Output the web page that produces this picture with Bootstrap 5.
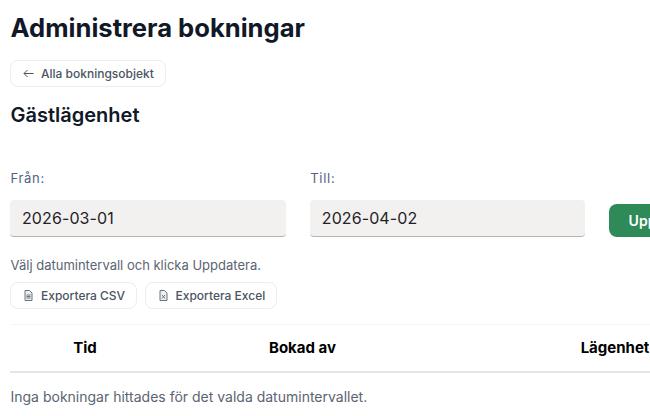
<!doctype html>
<html lang="sv">
<head>
<meta charset="utf-8">
<title>Administrera bokningar</title>
<link href="https://cdn.jsdelivr.net/npm/bootstrap@5.3.0/dist/css/bootstrap.min.css" rel="stylesheet">
<style>
html, body { overflow: hidden; height: 416px; }
body { font-family: "Inter", sans-serif; color: #111827; background: #fff; }
.page-wrap { width: 1000px; padding: 0 10px; }
.title-main { font-size: 25.6px; font-weight: 700; line-height: 32px; margin: 12px 0 16px; padding-left: .5px; color: #111827; }
.title-sub { font-size: 20px; font-weight: 600; line-height: 26px; margin: 15px 0 0; padding-left: .5px; color: #111827; }
.ghost-btn { display: inline-flex; align-items: center; height: 27px; padding: 0 11px 0 12px; gap: 7px; border: 1px solid #ecedef; border-radius: 8px; background: #fff; font-size: 12px; font-weight: 500; color: #4b5563; text-decoration: none; }
.ghost-btn svg { flex: none; }
.date-row { margin-top: 42px; gap: 24.2px; }
.date-col { width: 275.6px; }
.date-label { font-size: 13px; line-height: 16px; color: #4f6485; letter-spacing: .7px; margin-bottom: 14px; padding-left: .5px; display: block; }
.date-input { width: 100%; height: 37px; border: 0; border-bottom: 1px solid #b5b5b5; border-radius: 4px; background: #f2f1f0; font-family: inherit; font-size: 16px; letter-spacing: .1px; color: #1f2328; padding: 0 12px; }
.go-btn { height: 33px; width: 110px; margin-left: -.4px; border: 0; border-radius: 8px; background: #2e8b57; color: #fff; font-size: 14px; font-weight: 600; }
.hint { font-size: 13px; line-height: 16px; color: #5b6472; margin: 20px 0 9px; padding-left: .5px; }
.export-row { gap: 7.4px; }
.icon-slot { width: 10px; margin-left: 1px; display: inline-flex; }
.result-table { table-layout: fixed; width: 775px; margin: 15px 0 0; border-top: 1px solid #f5f5f6; border-bottom: 2px solid #e5e5e5; }
.result-table th { height: 47px; padding: 0; vertical-align: middle; text-align: center; font-size: 15px; font-weight: 700; color: #000; border: 0; }
.empty-note { font-size: 14px; line-height: 18px; color: #5b6472; margin: 15px 0 0; padding-left: .5px; }
</style>
</head>
<body>
<div class="page-wrap">
  <h1 class="title-main">Administrera bokningar</h1>
  <a class="ghost-btn" href="#">
    <svg width="11" height="9" viewBox="0 0 11 9" fill="none" stroke="#4b5563" stroke-width="1"><path d="M10.5 4.5H1M4.5 1 1 4.5 4.5 8"/></svg>
    Alla bokningsobjekt
  </a>
  <h2 class="title-sub">Gästlägenhet</h2>
  <div class="d-flex align-items-end date-row">
    <div class="date-col">
      <label class="date-label" for="from">Från:</label>
      <input class="date-input" id="from" type="text" value="2026-03-01">
    </div>
    <div class="date-col">
      <label class="date-label" for="to">Till:</label>
      <input class="date-input" id="to" type="text" value="2026-04-02">
    </div>
    <button class="go-btn" type="button">Uppdatera</button>
  </div>
  <p class="hint">Välj datumintervall och klicka Uppdatera.</p>
  <div class="d-flex export-row">
    <a class="ghost-btn" href="#">
      <span class="icon-slot"><svg width="9" height="11" viewBox="0 0 9 11" fill="#eceef1" stroke="#6b7280" stroke-width="1"><path d="M1 .5h4.5L8 3v7.5H1zM2.5 5h4M2.5 6.5h4M2.5 8h4"/></svg></span>
      Exportera CSV
    </a>
    <a class="ghost-btn" href="#">
      <span class="icon-slot"><svg width="9" height="11" viewBox="0 0 9 11" fill="#eceef1" stroke="#6b7280" stroke-width="1"><path d="M1 .5h4.5L8 3v7.5H1zM3 5l3 3.5M6 5 3 8.5"/></svg></span>
      Exportera Excel
    </a>
  </div>
  <table class="table result-table">
    <colgroup><col style="width:150px"><col style="width:285px"><col style="width:340px"></colgroup>
    <thead><tr><th>Tid</th><th>Bokad av</th><th>Lägenhet</th></tr></thead>
  </table>
  <p class="empty-note">Inga bokningar hittades för det valda datumintervallet.</p>
</div>
</body>
</html>
